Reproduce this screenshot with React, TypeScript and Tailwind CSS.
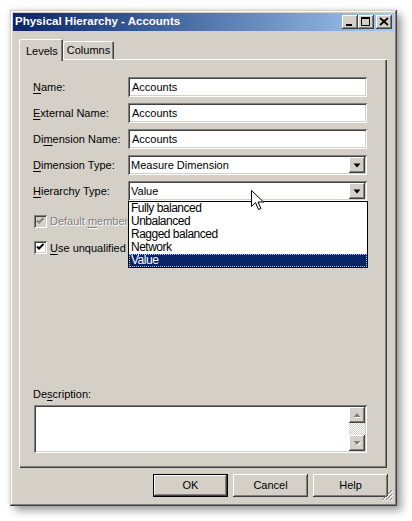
const FONT = 'font-["Liberation_Sans",Arial,sans-serif]'
const raised =
  'shadow-[inset_-1px_-1px_#404040,inset_1px_1px_#ffffff,inset_-2px_-2px_#808080,inset_2px_2px_#d4d0c8]'
const sunken =
  'shadow-[inset_1px_1px_#808080,inset_-1px_-1px_#ffffff,inset_2px_2px_#404040,inset_-2px_-2px_#d4d0c8]'

function Acc({ text, at }: { text: string; at: number }) {
  return (
    <>
      {text.slice(0, at)}
      <span className="underline underline-offset-2">{text[at]}</span>
      {text.slice(at + 1)}
    </>
  )
}

function TitleButton({ kind }: { kind: 'min' | 'max' | 'close' }) {
  return (
    <div className={`w-[16px] h-[14px] bg-[#d4d0c8] ${raised} flex items-center justify-center`}>
      <svg width="16" height="14" viewBox="0 0 16 14">
        {kind === 'min' && <rect x="4" y="9" width="6" height="2" fill="#000" />}
        {kind === 'max' && <path d="M3.5 2.5h8v8h-8z" fill="none" stroke="#000" strokeWidth="1" />}
        {kind === 'max' && <rect x="3" y="2" width="9" height="2" fill="#000" />}
        {kind === 'close' && <path d="M4 3l8 7M12 3l-8 7" stroke="#000" strokeWidth="1.7" />}
      </svg>
    </div>
  )
}

function DropArrow({ color = '#000' }: { color?: string }) {
  return (
    <svg width="16" height="16" viewBox="0 0 16 16">
      <path d="M4.5 6.5h7l-3.5 4z" fill={color} />
    </svg>
  )
}

function TextRow({ label, at, value }: { label: string; at: number; value: string }) {
  return (
    <div className="flex items-center h-[20px]">
      <div className="w-[95px]">
        <Acc text={label} at={at} />
      </div>
      <div className={`w-[239px] h-[20px] bg-white ${sunken} flex items-center pl-[4px]`}>{value}</div>
    </div>
  )
}

function ComboRow({
  label,
  at,
  value,
  children,
}: {
  label: string
  at: number
  value: string
  children?: React.ReactNode
}) {
  return (
    <div className="flex items-center h-[20px]">
      <div className="w-[95px]">
        <Acc text={label} at={at} />
      </div>
      <div className={`relative w-[239px] h-[20px] bg-white ${sunken} flex items-center pl-[2px] pr-[2px]`}>
        <span className="flex-1 pl-[1px]">{value}</span>
        <div className={`w-[16px] h-[16px] bg-[#d4d0c8] ${raised}`}>
          <DropArrow />
        </div>
        {children}
      </div>
    </div>
  )
}

function Check({ disabled }: { disabled?: boolean }) {
  return (
    <div className={`shrink-0 w-[13px] h-[13px] ${disabled ? 'bg-[#d4d0c8]' : 'bg-white'} ${sunken}`}>
      <svg width="13" height="13" viewBox="0 0 13 13">
        <path d="M3 5.5l2 2 4.5-4.5" fill="none" stroke={disabled ? '#808080' : '#000'} strokeWidth="2" />
      </svg>
    </div>
  )
}

function Button({ label, primary }: { label: string; primary?: boolean }) {
  const bevel = primary
    ? 'shadow-[inset_0_0_0_1px_#000,inset_-2px_-2px_#404040,inset_2px_2px_#ffffff,inset_-3px_-3px_#808080]'
    : raised
  return (
    <div className={`w-[75px] h-[23px] bg-[#d4d0c8] ${bevel} flex items-center justify-center`}>{label}</div>
  )
}

const OPTIONS = ['Fully balanced', 'Unbalanced', 'Ragged balanced', 'Network', 'Value']

export default function App() {
  return (
    <div className={`relative w-[412px] h-[521px] bg-white pt-[10px] pl-[10px] text-[11px] text-black ${FONT}`}>
      <div className="relative w-[387px] h-[496px] bg-[#d4d0c8] p-[3px] shadow-[inset_-1px_-1px_#404040,inset_1px_1px_#d4d0c8,inset_-2px_-2px_#808080,inset_2px_2px_#ffffff,5px_5px_8px_rgba(0,0,0,0.35),0_0_5px_rgba(0,0,0,0.15)]">
        {/* title bar */}
        <div className="h-[18px] bg-linear-to-r from-[#0a246a] to-[#a6caf0] flex items-center pl-[2px] pr-[2px]">
          <span className="flex-1 text-white font-bold text-[11.5px]">Physical Hierarchy - Accounts</span>
          <div className="flex items-center">
            <TitleButton kind="min" />
            <TitleButton kind="max" />
            <div className="w-[2px]" />
            <TitleButton kind="close" />
          </div>
        </div>

        {/* tabs */}
        <div className="flex items-end h-[20px] mt-[8px] ml-[6px]">
          <div className="relative z-10 w-[44px] h-[22px] -mb-[2px] bg-[#d4d0c8] rounded-t-[2px] shadow-[inset_1px_1px_#ffffff,inset_-1px_0_#404040,inset_-2px_0_#808080] pl-[7px] pt-[4px]">
            Levels
          </div>
          <div className="w-[51px] h-[18px] bg-[#d4d0c8] rounded-t-[2px] shadow-[inset_1px_1px_#ffffff,inset_-1px_0_#404040,inset_-2px_0_#808080] flex items-center justify-center">
            Columns
          </div>
        </div>

        {/* panel */}
        <div className="ml-[6px] w-[368px] h-[409px] flex flex-col pt-[18px] pl-[14px] pb-[15px] shadow-[inset_1px_1px_#ffffff,inset_-1px_-1px_#404040,inset_-2px_-2px_#808080]">
          <div className="flex flex-col gap-[6px]">
            <TextRow label="Name:" at={0} value="Accounts" />
            <TextRow label="External Name:" at={0} value="Accounts" />
            <TextRow label="Dimension Name:" at={2} value="Accounts" />
            <ComboRow label="Dimension Type:" at={0} value="Measure Dimension" />
            <ComboRow label="Hierarchy Type:" at={0} value="Value">
              <div className="absolute left-0 top-[20px] z-20 w-[240px] bg-white border border-black text-[12px] tracking-[-0.5px]">
                {OPTIONS.map((o) => (
                  <div
                    key={o}
                    className={`h-[13px] leading-[13px] pl-[2px] ${
                      o === 'Value'
                        ? 'bg-[#0a246a] text-white outline outline-1 outline-dotted outline-[#a6caf0] -outline-offset-1'
                        : ''
                    }`}
                  >
                    {o}
                  </div>
                ))}
              </div>
            </ComboRow>
          </div>

          <div className="flex flex-col gap-[10px] mt-[12px] ml-[1px]">
            <div className="flex items-center gap-[3px] whitespace-nowrap overflow-hidden w-[93px]">
              <Check disabled />
              <span className="text-[#808080] [text-shadow:1px_1px_0_#ffffff]">
                Default <Acc text="member" at={0} />
              </span>
            </div>
            <div className="flex items-center gap-[3px] whitespace-nowrap overflow-hidden w-[93px]">
              <Check />
              <span>
                <Acc text="Use unqualified" at={0} />
              </span>
            </div>
          </div>

          <div className="mt-auto">
            <Acc text="Description:" at={2} />
          </div>
          <div className={`mt-[3px] ml-[1px] w-[333px] h-[48px] bg-white ${sunken} flex justify-end p-[2px]`}>
            <div className="w-[16px] flex flex-col">
              <div className={`h-[16px] bg-[#d4d0c8] ${raised}`}>
                <svg width="16" height="16" viewBox="0 0 16 16">
                  <path d="M4.5 10h7l-3.5-4z" fill="#ffffff" transform="translate(1 1)" />
                  <path d="M4.5 10h7l-3.5-4z" fill="#808080" />
                </svg>
              </div>
              <div className="flex-1 bg-[repeating-conic-gradient(#d4d0c8_0%_25%,#ffffff_0%_50%)] bg-[length:2px_2px]" />
              <div className={`h-[16px] bg-[#d4d0c8] ${raised}`}>
                <svg width="16" height="16" viewBox="0 0 16 16">
                  <path d="M4.5 6h7l-3.5 4z" fill="#ffffff" transform="translate(1 1)" />
                  <path d="M4.5 6h7l-3.5 4z" fill="#808080" />
                </svg>
              </div>
            </div>
          </div>
        </div>

        {/* buttons */}
        <div className="flex justify-end gap-[5px] mt-[6px] pr-[6px]">
          <Button label="OK" primary />
          <Button label="Cancel" />
          <Button label="Help" />
        </div>

        {/* resize grip */}
        <svg className="absolute right-[4px] bottom-[5px]" width="12" height="12" viewBox="0 0 12 12">
          <path d="M11 1L1 11M11 5L5 11M11 9L9 11" stroke="#808080" strokeWidth="1" />
          <path d="M12 2L2 12M12 6L6 12M12 10L10 12" stroke="#ffffff" strokeWidth="1" />
        </svg>
      </div>

      {/* mouse cursor */}
      <svg className="absolute left-[251px] top-[190px] z-30" width="13" height="21" viewBox="0 0 13 21">
        <path d="M0.5 0.5v16l4-4 3 7 2.5-1-3-6.5h5.5z" fill="#ffffff" stroke="#000" strokeWidth="1" />
      </svg>
    </div>
  )
}
